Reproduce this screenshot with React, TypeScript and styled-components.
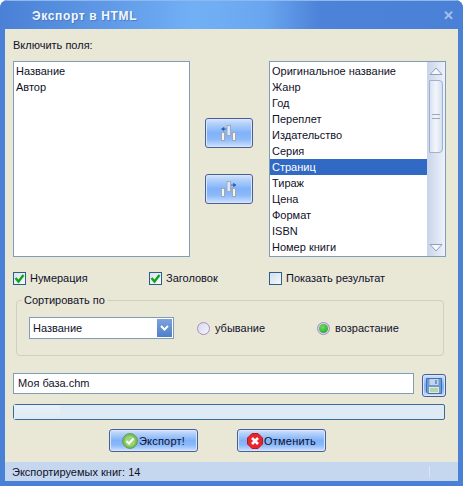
import React from 'react';
import styled, { createGlobalStyle } from 'styled-components';

const GlobalStyle = createGlobalStyle`
    html, body {
        margin: 0;
        padding: 0;
        background: #fff;
        overflow: hidden;
    }
    * {
        box-sizing: border-box;
    }
`;

const Frame = styled.div`
    width: 463px;
    height: 486px;
    display: flex;
    flex-direction: column;
    background: #4a80d6;
    border-radius: 8px 8px 0 0;
    overflow: hidden;
    font-family: 'Liberation Sans', sans-serif;
    font-size: 11px;
    color: #10102a;
`;

const TitleBar = styled.div`
    height: 29px;
    flex: none;
    display: flex;
    align-items: center;
    justify-content: space-between;
    padding: 2px 9px 0 32px;
    background: linear-gradient(90deg, #4a80d6 0, #5a93e2 80px, #72b0f6 195px, #6aa6ef 265px, #4c82d8 320px, #4a80d6 100%);
    box-shadow: inset 0 1px 0 #8fb9ee;
`;

const TitleText = styled.span`
    font-size: 12px;
    font-weight: bold;
    letter-spacing: 0.65px;
    color: #f2f7fd;
    text-shadow: 1px 1px 1px #4a78c0;
`;

const CloseMark = styled.span`
    font-size: 13px;
    font-weight: bold;
    color: #a4c0ea;
    line-height: 1;
`;

const Body = styled.div`
    flex: 1;
    margin: 0 5px 5px;
    display: flex;
    flex-direction: column;
    background: #e9e7d6;
`;

const Content = styled.div`
    flex: 1;
    padding: 8px 12px 0 8px;
    display: flex;
    flex-direction: column;
`;

const FieldsLabel = styled.div`
    height: 16px;
    line-height: 16px;
    margin-bottom: 8px;
`;

const ListsRow = styled.div`
    display: grid;
    grid-template-columns: 177px 79px 177px;
    height: 196px;
`;

const ListBox = styled.div`
    position: relative;
    height: 196px;
    background: #fff;
    border: 1px solid #7f9db9;
    padding: 1px 0;
    overflow: hidden;
`;

const ListItem = styled.div<{ $selected?: boolean }>`
    height: 16px;
    line-height: 16px;
    padding-left: 2px;
    margin-right: ${p => (p.$selected ? '18px' : '0')};
    background: ${p => (p.$selected ? '#316ac5' : 'transparent')};
    color: ${p => (p.$selected ? '#fff' : '#10102a')};
    white-space: nowrap;
`;

const ScrollTrack = styled.div`
    position: absolute;
    top: 0;
    right: 0;
    bottom: 0;
    width: 18px;
    display: flex;
    flex-direction: column;
    align-items: center;
    background: linear-gradient(90deg, #c8d4ea, #eef2fa);
`;

const ScrollArrow = styled.div`
    height: 17px;
    flex: none;
    display: flex;
    align-items: center;
    justify-content: center;
`;

const ScrollThumb = styled.div`
    width: 14px;
    height: 73px;
    margin-top: 1px;
    display: flex;
    flex-direction: column;
    align-items: center;
    justify-content: center;
    gap: 3px;
    border: 1px solid #9eb1cf;
    border-radius: 1px 4px 4px 1px;
    background: linear-gradient(90deg, #d9e2f1, #f3f6fb 50%, #d5dff0);
`;

const ThumbLine = styled.div`
    width: 8px;
    height: 1px;
    background: #9aa8c2;
`;

const ScrollSpacer = styled.div`
    flex: 1;
`;

const MoveColumn = styled.div`
    display: flex;
    flex-direction: column;
    align-items: center;
    padding-top: 57px;
    gap: 26px;
    padding-right: 1px;
`;

const GlossButton = styled.button<{ $w: number; $h: number }>`
    width: ${p => p.$w}px;
    height: ${p => p.$h}px;
    padding: 0;
    display: flex;
    align-items: center;
    justify-content: center;
    gap: 1px;
    font: inherit;
    letter-spacing: 0.2px;
    color: #10102a;
    border: 1px solid #4a5c9c;
    border-radius: 3px;
    background: linear-gradient(180deg, #d5e5fb 0, #b4d1fa 16%, #80b2f9 50%, #8bb9fa 72%, #cfe1fc 100%);
    box-shadow: inset 0 0 0 1px #d8e6fa;
`;

const ChecksRow = styled.div`
    display: grid;
    grid-template-columns: 136px 120px 1fr;
    margin-top: 14px;
    height: 14px;
`;

const CheckLabel = styled.label`
    display: flex;
    align-items: center;
    gap: 4px;
    line-height: 14px;
`;

const CheckBox = styled.span<{ $empty?: boolean }>`
    width: 13px;
    height: 13px;
    flex: none;
    display: flex;
    align-items: center;
    justify-content: center;
    border: 1px solid #2a5f8c;
    background: ${p => (p.$empty ? 'linear-gradient(135deg, #d3deef, #f6f8fc)' : 'linear-gradient(135deg, #dde3ea, #f8f9fb)')};
`;

const SortGroup = styled.fieldset`
    margin: 9px 2px 0 3px;
    padding: 0 0 0 12px;
    height: 62px;
    min-width: 0;
    border: 1px solid #d0d0bf;
    border-radius: 4px;
`;

const SortLegend = styled.legend`
    margin-left: -7px;
    padding: 0 2px;
    line-height: 12px;
`;

const SortRow = styled.div`
    display: flex;
    align-items: center;
    margin-top: 11px;
`;

const SelectBox = styled.div`
    width: 145px;
    height: 22px;
    margin-right: 23px;
    display: flex;
    align-items: center;
    justify-content: space-between;
    padding: 1px 1px 1px 3px;
    background: #fff;
    border: 1px solid #7f9db9;
`;

const SelectArrow = styled.div`
    width: 15px;
    height: 18px;
    display: flex;
    align-items: center;
    justify-content: center;
    background: linear-gradient(180deg, #7fa2dc, #4f7fc9);
`;

const RadioLabel = styled.label<{ $w: number }>`
    display: flex;
    align-items: center;
    gap: 5px;
    width: ${p => p.$w}px;
`;

const RadioDot = styled.span<{ $on?: boolean }>`
    width: 13px;
    height: 13px;
    flex: none;
    display: flex;
    align-items: center;
    justify-content: center;
    border-radius: 50%;
    border: 1px solid #a98bc9;
    background: ${p => (p.$on ? '#d5d8e4' : 'linear-gradient(135deg, #d6d9ea, #f3f4fa)')};
`;

const RadioFill = styled.span`
    width: 9px;
    height: 9px;
    border-radius: 50%;
    background: radial-gradient(circle at 40% 35%, #6fdc5e, #1c9a28);
`;

const FileRow = styled.div`
    display: flex;
    align-items: flex-start;
    justify-content: space-between;
    margin-top: 17px;
    height: 24px;
`;

const FileInput = styled.div`
    width: 401px;
    height: 21px;
    line-height: 19px;
    padding-left: 4px;
    background: #fff;
    border: 1px solid #7f9db9;
`;

const SaveWrap = styled.div`
    margin-top: 1px;
`;

const ProgressBar = styled.div`
    margin-top: 7px;
    height: 16px;
    width: 432px;
    border: 1px solid #3d6a95;
    border-radius: 3px 2px 2px 3px;
    background: #deebf5;
`;

const ProgressStart = styled.div`
    width: 46px;
    height: 100%;
    background: linear-gradient(180deg, #e6f0f7, #dfeaf4);
`;

const ActionsRow = styled.div`
    display: flex;
    gap: 39px;
    margin-top: 9px;
    padding-left: 96px;
`;

const StatusBar = styled.div`
    height: 19px;
    flex: none;
    display: flex;
    align-items: center;
    justify-content: space-between;
    padding: 0 0 0 7px;
    background: #c5d7ee;
`;

const StatusGrip = styled.div`
    width: 1px;
    height: 11px;
    margin-right: 28px;
    background: #dbe6f4;
`;

const TriangleUp = () => (
    <svg width="14" height="8" viewBox="0 0 14 8">
        <path d="M1 7.5 L7 1 L13 7.5 Z" fill="#f4f6fb" stroke="#8f9fbd" />
    </svg>
);

const TriangleDown = () => (
    <svg width="14" height="8" viewBox="0 0 14 8">
        <path d="M1 .5 L7 7 L13 .5 Z" fill="#f4f6fb" stroke="#8f9fbd" />
    </svg>
);

const MoveIcon = ({ right }: { right?: boolean }) => (
    <svg width="16" height="17" viewBox="0 0 16 17">
        <rect x="0.5" y="7.5" width="3" height="8" fill="#f2f5fa" stroke="#a8a8a8" />
        <rect x="11.5" y="7.5" width="3" height="8" fill="#f2f5fa" stroke="#a8a8a8" />
        <rect x="6" y="0.5" width="3.5" height="10" fill="#dbeafa" stroke="#a4a8b8" />
        {right ? (
            <path d="M10 4 H12.5 M12.5 2.5 L15 4 L12.5 5.5 Z" fill="#2c5fa8" stroke="#2c5fa8" strokeWidth="0.8" />
        ) : (
            <path d="M3 4 H5.5 M3 2.5 L0.5 4 L3 5.5 Z" fill="#2c5fa8" stroke="#2c5fa8" strokeWidth="0.8" />
        )}
    </svg>
);

const CheckMark = () => (
    <svg width="11" height="11" viewBox="0 0 11 11">
        <path d="M1.5 5 L4.5 8.5 L9.5 2" fill="none" stroke="#0ea51e" strokeWidth="2.4" />
    </svg>
);

const ChevronDown = () => (
    <svg width="9" height="7" viewBox="0 0 9 7">
        <path d="M1 1 L4.5 4.5 L8 1" fill="none" stroke="#fff" strokeWidth="2" />
    </svg>
);

const FloppyIcon = () => (
    <svg width="16" height="16" viewBox="0 0 16 16">
        <path d="M.5 .5 H15.5 V15.5 H2 L.5 14 Z" fill="#6d9ad2" stroke="#47709f" />
        <rect x="3.5" y="1" width="9" height="6" fill="#c3d5ec" />
        <rect x="9" y="2" width="2" height="4" fill="#6d9ad2" />
        <rect x="3" y="9" width="10" height="6" fill="#dfe9d8" />
        <path d="M4 11 H12 M4 13 H12" stroke="#8fbc7e" />
    </svg>
);

const OkIcon = () => (
    <svg width="16" height="16" viewBox="0 0 16 16">
        <circle cx="8" cy="8" r="7.4" fill="#7cc05a" stroke="#5f9f48" />
        <circle cx="8" cy="8" r="5.2" fill="#9ad47c" />
        <path d="M4.5 8 L7 10.5 L11.5 5.5" fill="none" stroke="#fff" strokeWidth="2" />
    </svg>
);

const CancelIcon = () => (
    <svg width="16" height="16" viewBox="0 0 16 16">
        <path d="M5 .5 H11 L15.5 5 V11 L11 15.5 H5 L.5 11 V5 Z" fill="#e8242c" stroke="#c4141c" />
        <path d="M5 5 L11 11 M11 5 L5 11" fill="none" stroke="#fff" strokeWidth="2.6" />
    </svg>
);

const leftFields = ['Название', 'Автор'];
const rightFields = [
    'Оригинальное название',
    'Жанр',
    'Год',
    'Переплет',
    'Издательство',
    'Серия',
    'Страниц',
    'Тираж',
    'Цена',
    'Формат',
    'ISBN',
    'Номер книги',
];

const App = () => {
    return (
        <Frame>
            <GlobalStyle />
            <TitleBar>
                <TitleText>Экспорт в HTML</TitleText>
                <CloseMark>✕</CloseMark>
            </TitleBar>
            <Body>
                <Content>
                    <FieldsLabel>Включить поля:</FieldsLabel>
                    <ListsRow>
                        <ListBox>
                            {leftFields.map(f => (
                                <ListItem key={f}>{f}</ListItem>
                            ))}
                        </ListBox>
                        <MoveColumn>
                            <GlossButton $w={48} $h={30}>
                                <MoveIcon />
                            </GlossButton>
                            <GlossButton $w={48} $h={30}>
                                <MoveIcon right />
                            </GlossButton>
                        </MoveColumn>
                        <ListBox>
                            {rightFields.map(f => (
                                <ListItem key={f} $selected={f === 'Страниц'}>
                                    {f}
                                </ListItem>
                            ))}
                            <ScrollTrack>
                                <ScrollArrow>
                                    <TriangleUp />
                                </ScrollArrow>
                                <ScrollThumb>
                                    <ThumbLine />
                                    <ThumbLine />
                                </ScrollThumb>
                                <ScrollSpacer />
                                <ScrollArrow>
                                    <TriangleDown />
                                </ScrollArrow>
                            </ScrollTrack>
                        </ListBox>
                    </ListsRow>
                    <ChecksRow>
                        <CheckLabel>
                            <CheckBox>
                                <CheckMark />
                            </CheckBox>
                            Нумерация
                        </CheckLabel>
                        <CheckLabel>
                            <CheckBox>
                                <CheckMark />
                            </CheckBox>
                            Заголовок
                        </CheckLabel>
                        <CheckLabel>
                            <CheckBox $empty />
                            Показать результат
                        </CheckLabel>
                    </ChecksRow>
                    <SortGroup>
                        <SortLegend>Сортировать по</SortLegend>
                        <SortRow>
                            <SelectBox>
                                Название
                                <SelectArrow>
                                    <ChevronDown />
                                </SelectArrow>
                            </SelectBox>
                            <RadioLabel $w={120}>
                                <RadioDot />
                                убывание
                            </RadioLabel>
                            <RadioLabel $w={100}>
                                <RadioDot $on>
                                    <RadioFill />
                                </RadioDot>
                                возрастание
                            </RadioLabel>
                        </SortRow>
                    </SortGroup>
                    <FileRow>
                        <FileInput>Моя база.chm</FileInput>
                        <SaveWrap>
                            <GlossButton $w={24} $h={23}>
                                <FloppyIcon />
                            </GlossButton>
                        </SaveWrap>
                    </FileRow>
                    <ProgressBar>
                        <ProgressStart />
                    </ProgressBar>
                    <ActionsRow>
                        <GlossButton $w={89} $h={23}>
                            <OkIcon />
                            Экспорт!
                        </GlossButton>
                        <GlossButton $w={89} $h={23}>
                            <CancelIcon />
                            Отменить
                        </GlossButton>
                    </ActionsRow>
                </Content>
                <StatusBar>
                    Экспортируемых книг: 14
                    <StatusGrip />
                </StatusBar>
            </Body>
        </Frame>
    );
};

export default App;
